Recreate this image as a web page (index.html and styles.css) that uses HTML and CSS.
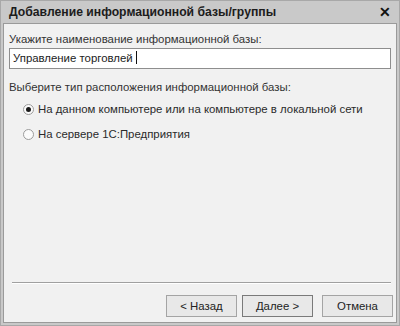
FILE: index.html
```html
<!DOCTYPE html>
<html lang="ru">
<head>
    <meta charset="UTF-8">
    <title>Добавление информационной базы/группы</title>
    <link rel="stylesheet" href="styles.css">
</head>
<body>
    <div class="window">
        <div class="titlebar">
            <span class="title">Добавление информационной базы/группы</span>
            <span class="close">✕</span>
        </div>
        <div class="content">
            <label class="caption" for="name">Укажите наименование информационной базы:</label>
            <div class="input">Управление торговлей <span class="caret"></span></div>

            <div class="caption group-caption">Выберите тип расположения информационной базы:</div>
            <div class="radio-list">
                <div class="radio-row">
                    <span class="radio checked"></span>
                    <span>На данном компьютере или на компьютере в локальной сети</span>
                </div>
                <div class="radio-row">
                    <span class="radio"></span>
                    <span>На сервере 1С:Предприятия</span>
                </div>
            </div>

            <div class="spacer"></div>
            <div class="separator"></div>
            <div class="buttons">
                <button class="btn">&lt; Назад</button>
                <button class="btn default">Далее &gt;</button>
                <button class="btn cancel">Отмена</button>
            </div>
        </div>
    </div>
</body>
</html>
```

FILE: styles.css
```css
html, body {
    margin: 0;
    padding: 0;
}
body {
    font-family: "Liberation Sans", Arial, sans-serif;
    font-size: 11.4px;
    color: #2a2a2a;
    background: #ffffff;
}
.window {
    width: 400px;
    height: 326px;
    box-sizing: border-box;
    background: #c9c9c9; /* frame gray */
    border: 1px solid #a8a8a8;
    display: flex;
    flex-direction: column;
    padding: 0 2px 2px 2px;
}
.titlebar {
    height: 22px;
    display: flex;
    align-items: center;
    justify-content: space-between;
    padding: 0 6px 0 6px;
    flex: none;
}
.title {
    font-weight: bold;
    font-size: 12.2px;
    color: #1c1c1c;
}
.close {
    font-weight: bold;
    font-size: 14px;
    color: #111;
}
.content {
    flex: 1;
    background: #f1f1f1;
    border: 1px solid #9a9a9a;
    display: flex;
    flex-direction: column;
    padding: 8px 3px 5px 5px;
}
.caption {
    display: block;
    color: #333;
    line-height: 14px;
}
.input {
    margin-top: 2px;
    margin-right: 2px;
    height: 19px;
    border: 1px solid #8e8e8e;
    background: #ffffff;
    line-height: 19px;
    padding-left: 3px;
    color: #222;
}
.caret {
    display: inline-block;
    width: 1px;
    height: 13px;
    background: #111;
    vertical-align: -2px;
}
.group-caption {
    margin-top: 11px;
}
.radio-list {
    margin-top: 8px;
    padding-left: 14px;
    display: flex;
    flex-direction: column;
    gap: 11px;
}
.radio-row {
    display: flex;
    align-items: center;
    gap: 4px;
    height: 14px;
    line-height: 14px;
}
.radio {
    width: 11px;
    height: 11px;
    flex: none;
    box-sizing: border-box;
    border: 1px solid #9c9c9c;
    border-radius: 50%;
    background: #fbfbfb;
    display: flex;
    align-items: center;
    justify-content: center;
}
.radio.checked::after {
    content: "";
    width: 5px;
    height: 5px;
    border-radius: 50%;
    background: #1a1a1a;
}
.spacer {
    flex: 1;
}
.separator {
    border-top: 1px solid #a0a0a0;
    border-bottom: 1px solid #ffffff;
    margin: 0 2px 0 3px;
}
.buttons {
    display: flex;
    justify-content: flex-end;
    margin-top: 11px;
}
.btn {
    font-family: inherit;
    font-size: 11.4px;
    color: #222;
    width: 71px;
    height: 22px;
    background: #e8e8e8;
    border: 1px solid #a4a4a4;
    padding: 0;
    margin-left: 5px;
}
.btn.default {
    border-color: #7a7a7a;
}
.btn.cancel {
    margin-left: 9px;
}
```
